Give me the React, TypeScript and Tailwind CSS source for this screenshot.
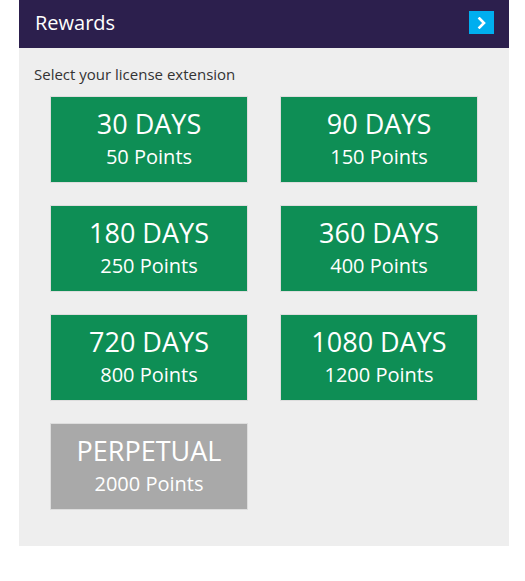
import React from "react";

const items = [
  { d: "30 DAYS", p: "50 Points" },
  { d: "90 DAYS", p: "150 Points" },
  { d: "180 DAYS", p: "250 Points" },
  { d: "360 DAYS", p: "400 Points" },
  { d: "720 DAYS", p: "800 Points" },
  { d: "1080 DAYS", p: "1200 Points" },
];

function Tile({ d, p, gray }: { d: string; p: string; gray?: boolean }) {
  return (
    <div
      className={`h-[87px] w-[198px] border border-[#dddddd] flex flex-col items-center justify-center pb-[3px] text-white ${
        gray ? "bg-[#a9a9a9]" : "bg-[#0e8e55]"
      }`}
    >
      <div className="text-[27px] leading-[36px]">{d}</div>
      <div className="text-[20px] leading-[28px] mt-[1px]">{p}</div>
    </div>
  );
}

export default function App() {
  return (
    <div className="min-h-[581px] bg-white" style={{ fontFamily: '"Open Sans", sans-serif' }}>
      <div className="ml-[19px] w-[490px]">
        <div className="h-[48px] bg-[#2c1f4d] flex items-center justify-between pl-[16px] pr-[15px]">
          <span className="text-white text-[20px] leading-[28px] -mt-[2px]">Rewards</span>
          <div className="w-[25px] h-[23px] bg-[#00aeef] flex items-center justify-center -mt-[3px]">
            <svg width="10" height="12" viewBox="0 0 10 12">
              <path d="M2.5 1.5 L7 6 L2.5 10.5" stroke="white" strokeWidth="2.6" fill="none" strokeLinecap="square" />
            </svg>
          </div>
        </div>
        <div className="bg-[#eeeeee] pt-[16px] pb-[36px]">
          <div className="pl-[15px] text-[15px] leading-[20px] text-[#333333]">Select your license extension</div>
          <div className="mt-[12px] grid grid-cols-[198px_198px] gap-x-[32px] gap-y-[22px] justify-center">
            {items.map((it) => (
              <Tile key={it.d} d={it.d} p={it.p} />
            ))}
            <Tile d="PERPETUAL" p="2000 Points" gray />
          </div>
        </div>
      </div>
    </div>
  );
}
